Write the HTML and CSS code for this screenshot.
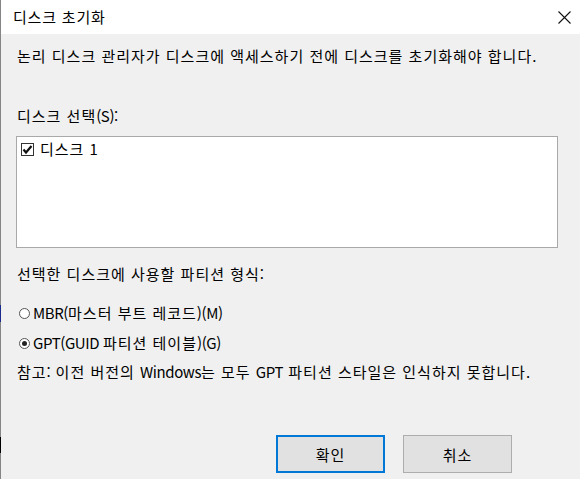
FILE: index.html
```html
<!DOCTYPE html>
<html lang="ko">
<head>
<meta charset="utf-8">
<title>디스크 초기화</title>
<link rel="stylesheet" href="styles.css">
</head>
<body>
<div class="window">
  <span class="edge edge-blue"></span>
  <span class="edge edge-black"></span>
  <div class="titlebar">
    <span class="title">디스크 초기화</span>
    <svg class="close" width="13" height="13" viewBox="0 0 13 13"><path d="M0.5 0.5 L12.5 12.5 M12.5 0.5 L0.5 12.5" stroke="#111" stroke-width="1.1" fill="none"/></svg>
  </div>
  <div class="content">
    <p class="line intro">논리 디스크 관리자가 디스크에 액세스하기 전에 디스크를 초기화해야 합니다.</p>
    <p class="line select-label">디스크 선택<span class="lat">(S):</span></p>
    <div class="listbox">
      <div class="item">
        <span class="checkbox"><svg width="11" height="11" viewBox="0 0 11 11"><path d="M1.5 5.5 L4 8.5 L9.5 2" stroke="#111" stroke-width="2.2" fill="none"/></svg></span>
        <span>디스크 <span class="lat">1</span></span>
      </div>
    </div>
    <p class="line style-label">선택한 디스크에 사용할 파티션 형식<span class="lat">:</span></p>
    <div class="line radio-row mbr"><span class="radio"></span><span class="rtext"><span class="lat">MBR(</span>마스터 부트 레코드<span class="lat">)(M)</span></span></div>
    <div class="line radio-row gpt"><span class="radio checked"></span><span class="rtext"><span class="lat">GPT(GUID </span>파티션 테이블<span class="lat">)(G)</span></span></div>
    <p class="line note">참고<span class="lat">:</span> 이전 버전의 <span class="lat">Windows</span>는 모두 <span class="lat">GPT</span> 파티션 스타일은 인식하지 못합니다.</p>
    <div class="buttons">
      <button class="btn default">확인</button>
      <button class="btn">취소</button>
    </div>
  </div>
</div>
</body>
</html>
```

FILE: styles.css
```css
* { box-sizing: border-box; }
html, body { margin: 0; padding: 0; }
body {
  width: 580px;
  height: 479px;
  overflow: hidden;
  background: #f0f0f0;
  font-family: "Noto Sans CJK KR", "Noto Sans", sans-serif;
  font-size: 15px;
  color: #000;
}
.window {
  position: relative;
  width: 580px;
  height: 479px;
  border-left: 1px solid #858585;
  background: #f0f0f0;
  letter-spacing: 1px;
}
.edge {
  position: absolute;
  left: -1px;
  width: 1px;
}
.edge-blue { top: 305px; height: 17px; background: #1a2a8a; }
.edge-black { top: 437px; height: 16px; background: #000; }
.lat { letter-spacing: -0.4px; }
.titlebar {
  height: 34px;
  background: #fff;
  display: flex;
  align-items: center;
  justify-content: space-between;
  padding: 0 9px 0 12px;
}
.title { font-size: 15px; line-height: 20px; letter-spacing: 0.8px; }
.close { display: block; }
.content {
  padding: 0 21px 0 15px;
}
.line {
  margin: 0;
  line-height: 20px;
  height: 20px;
  white-space: nowrap;
}
.intro { margin-top: 12px; padding-left: 1px; }
.select-label { margin-top: 40px; padding-left: 1px; }
.listbox {
  margin-top: 10px;
  width: 542px;
  height: 112px;
  background: #fff;
  border: 1px solid #a9a9a9;
  padding: 2px 4px;
}
.item {
  display: flex;
  align-items: center;
  gap: 6px;
  line-height: 20px;
  height: 20px;
}
.checkbox {
  width: 13px;
  height: 13px;
  border: 1px solid #333;
  background: #fff;
  display: flex;
  align-items: center;
  justify-content: center;
}
.checkbox svg { display: block; }
.style-label { margin-top: 16px; padding-left: 1px; }
.radio-row {
  display: flex;
  align-items: center;
  gap: 3px;
  padding-left: 3px;
}
.mbr { margin-top: 19px; }
.gpt { margin-top: 10px; }
.radio {
  width: 11px;
  height: 11px;
  border: 1px solid #555;
  border-radius: 50%;
  background: #fff;
  display: flex;
  align-items: center;
  justify-content: center;
}
.radio.checked::after {
  content: "";
  width: 5px;
  height: 5px;
  border-radius: 50%;
  background: #222;
}
.note { margin-top: 9px; padding-left: 1px; }
.buttons {
  margin-top: 53px;
  display: flex;
  gap: 18px;
  padding-left: 260px;
}
.btn {
  width: 109px;
  height: 38px;
  background: #e1e1e1;
  border: 1px solid #adadad;
  font-family: "Noto Sans CJK KR", "Noto Sans", sans-serif;
  font-size: 15px;
  letter-spacing: 1px;
  color: #000;
  padding: 0;
}
.btn.default {
  border: 2px solid #0078d7;
}
```
